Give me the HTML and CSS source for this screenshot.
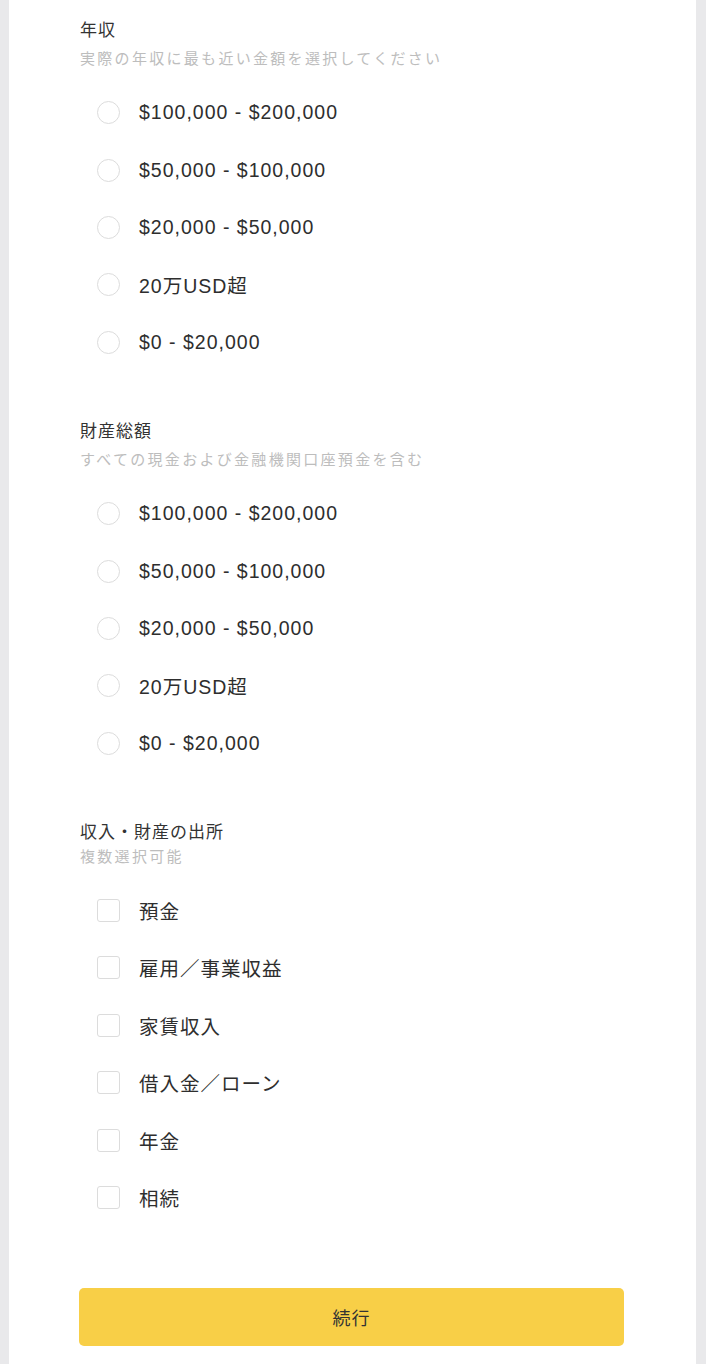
FILE: index.html
```html
<!DOCTYPE html>
<html lang="ja">
<head>
<meta charset="utf-8">
<link rel="stylesheet" href="styles.css">
</head>
<body>
<div class="panel">
  <section class="group">
    <h2 class="title">年収</h2>
    <p class="hint">実際の年収に最も近い金額を選択してください</p>
    <ul class="options">
      <li class="option"><span class="radio"></span><span class="label">$100,000 - $200,000</span></li>
      <li class="option"><span class="radio"></span><span class="label">$50,000 - $100,000</span></li>
      <li class="option"><span class="radio"></span><span class="label">$20,000 - $50,000</span></li>
      <li class="option"><span class="radio"></span><span class="label">20万USD超</span></li>
      <li class="option"><span class="radio"></span><span class="label">$0 - $20,000</span></li>
    </ul>
  </section>
  <section class="group">
    <h2 class="title">財産総額</h2>
    <p class="hint">すべての現金および金融機関口座預金を含む</p>
    <ul class="options">
      <li class="option"><span class="radio"></span><span class="label">$100,000 - $200,000</span></li>
      <li class="option"><span class="radio"></span><span class="label">$50,000 - $100,000</span></li>
      <li class="option"><span class="radio"></span><span class="label">$20,000 - $50,000</span></li>
      <li class="option"><span class="radio"></span><span class="label">20万USD超</span></li>
      <li class="option"><span class="radio"></span><span class="label">$0 - $20,000</span></li>
    </ul>
  </section>
  <section class="group group-last">
    <h2 class="title">収入・財産の出所</h2>
    <p class="hint hint-tight">複数選択可能</p>
    <ul class="options">
      <li class="option"><span class="check"></span><span class="label">預金</span></li>
      <li class="option"><span class="check"></span><span class="label">雇用／事業収益</span></li>
      <li class="option"><span class="check"></span><span class="label">家賃収入</span></li>
      <li class="option"><span class="check"></span><span class="label">借入金／ローン</span></li>
      <li class="option"><span class="check"></span><span class="label">年金</span></li>
      <li class="option"><span class="check"></span><span class="label">相続</span></li>
    </ul>
  </section>
  <button class="submit">続行</button>
</div>
</body>
</html>
```

FILE: styles.css
```css
* { box-sizing: border-box; }
html, body { margin: 0; padding: 0; }
body {
  background: #e9e9eb;
  font-family: "Liberation Sans", "Noto Sans CJK JP", sans-serif;
  color: #333;
  height: 1364px;
  overflow: hidden;
}
.panel {
  margin: 0 10px 0 9px;
  background: #fff;
  min-height: 1364px;
  padding: 16px 72px 0 71px;
  display: flex;
  flex-direction: column;
}
.group { margin-bottom: 46px; }
.group-last { margin-bottom: 62px; }
.title {
  margin: 0;
  font-size: 17px;
  font-weight: normal;
  line-height: 30px;
  letter-spacing: 1px;
  color: #333;
}
.hint {
  margin: 0;
  font-size: 15px;
  line-height: 26px;
  letter-spacing: 2.3px;
  color: #bdbdbd;
}
.hint-tight { margin-top: -4px; }
.options {
  list-style: none;
  margin: 12px 0 0;
  padding: 0 0 0 17px;
}
.option {
  display: flex;
  align-items: center;
  height: 57.4px;
  gap: 19px;
}
.radio {
  width: 23px;
  height: 23px;
  border: 1px solid #dcdcdc;
  border-radius: 50%;
  flex: none;
}
.check {
  width: 23px;
  height: 23px;
  border: 1px solid #dcdcdc;
  border-radius: 3px;
  flex: none;
}
.label {
  font-size: 19.5px;
  letter-spacing: 1px;
  color: #2e2e2e;
}
.submit {
  width: 545px;
  height: 58px;
  margin-left: -1px;
  border: none;
  border-radius: 5px;
  background: #f8cf47;
  font-family: "Liberation Sans", "Noto Sans CJK JP", sans-serif;
  font-size: 18px;
  letter-spacing: 1px;
  color: #333;
}
```
